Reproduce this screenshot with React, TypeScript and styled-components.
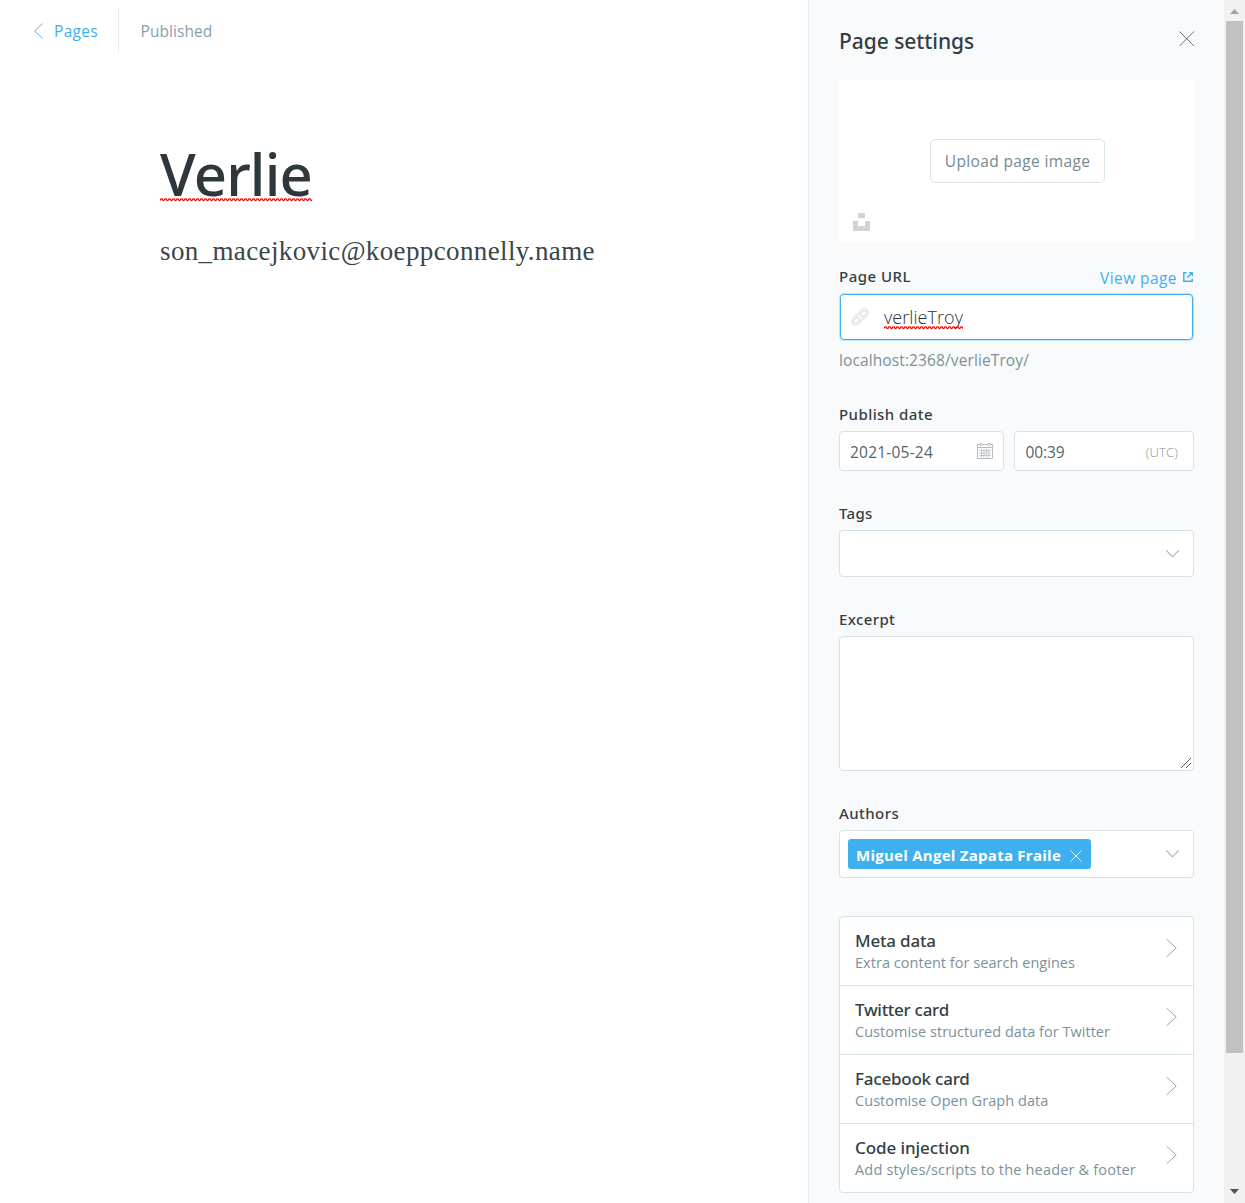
import React from "react";
import styled, { createGlobalStyle } from "styled-components";

const sans = '"Open Sans", "Noto Sans", sans-serif';
const medium = '"Noto Sans", "Open Sans", sans-serif';
const blue = "#3eb0ef";
const line = "#d7e3ea";
const ink = "#343f44";
const muted = "#7c919b";

const GlobalStyle = createGlobalStyle`
  * { box-sizing: border-box; }
  body { margin: 0; background: #fff; overflow: hidden; font-family: ${sans}; }
`;

interface Tracked {
  $track?: number;
}

const Shell = styled.div`
  display: flex;
  width: 1245px;
  height: 1203px;
  overflow: hidden;
`;

/* Editor */
const Editor = styled.main`
  flex: 1;
  min-width: 0;
`;
const TopBar = styled.header`
  display: flex;
  align-items: center;
  height: 45px;
  margin-top: 8px;
  padding-left: 34px;
  font-size: 15.5px;
  line-height: 20px;
`;
const BackLink = styled.a`
  display: flex;
  align-items: center;
  gap: 11px;
  width: 85px;
  height: 45px;
  border-right: 1px solid #e3edf3;
  color: ${blue};
  letter-spacing: 0.31px;
  span { padding-top: 1px; }
`;
const Status = styled.span`
  margin-left: 21.5px;
  padding-top: 1px;
  color: #8a9ea8;
  letter-spacing: 0.06px;
`;
const Article = styled.article`
  padding: 89px 0 0 160px;
`;
const Title = styled.h1`
  margin: 0;
  font: 500 58px/64px ${medium};
  letter-spacing: -0.83px;
  color: #2d373c;
`;
const Body = styled.p`
  margin: 25px 0 0;
  font: 27px/40px "Liberation Serif", serif;
  letter-spacing: 0.37px;
  color: #3a464c;
`;
const Misspelt = styled.span`
  position: relative;
  display: inline-block;
`;
const Wave = styled.svg<{ $top: number }>`
  position: absolute;
  left: 0;
  top: ${(p) => p.$top}px;
`;

/* Settings panel */
const Panel = styled.aside`
  width: 416px;
  padding: 0 30px;
  border-left: 1px solid #e3edf3;
  background: #f9fafc;
`;
const PanelHeader = styled.div`
  display: flex;
  justify-content: space-between;
  height: 80px;
  padding-top: 26px;
`;
const PanelTitle = styled.h2`
  margin: 0;
  font: 500 21px/30px ${medium};
  letter-spacing: -0.04px;
  color: ${ink};
`;
const CloseIcon = styled.svg`
  margin: 5px -1px 0 0;
`;
const Uploader = styled.div`
  position: relative;
  display: flex;
  align-items: center;
  justify-content: center;
  height: 162px;
  padding-left: 2px;
  border-radius: 4px;
  background: #fff;
`;
const UploadButton = styled.div`
  display: flex;
  align-items: center;
  justify-content: center;
  width: 175px;
  height: 44px;
  border: 1px solid ${line};
  border-radius: 5px;
  font-size: 15.5px;
  letter-spacing: 0.36px;
  color: #738a94;
`;
const UnsplashIcon = styled.svg`
  position: absolute;
  left: 14px;
  bottom: 11px;
`;
const Field = styled.section<{ $gap: number }>`
  margin-top: ${(p) => p.$gap}px;
`;
const LabelRow = styled.div`
  display: flex;
  justify-content: space-between;
  height: 27px;
`;
const Label = styled.label<Tracked>`
  font: 500 15px/20px ${medium};
  letter-spacing: ${(p) => p.$track ?? 0.43}px;
  color: ${ink};
`;
const ViewLink = styled.a`
  display: flex;
  gap: 6px;
  padding: 1px 1px 0 0;
  font-size: 15.5px;
  line-height: 22px;
  letter-spacing: 0.43px;
  color: ${blue};
  svg { margin-top: 5px; }
`;
const UrlInput = styled.div`
  display: flex;
  align-items: center;
  gap: 14px;
  height: 46px;
  margin: 1px;
  padding-left: 10px;
  border: 1px solid ${blue};
  border-radius: 4px;
  box-shadow: 0 0 0 1px rgba(62, 176, 239, 0.3);
  background: #fff;
  font-size: 18px;
  font-weight: 300;
  line-height: 24px;
  letter-spacing: 0.06px;
  color: #2b3338;
`;
const Hint = styled.p`
  margin: 10px 0 0;
  font-size: 15.5px;
  line-height: 20px;
  letter-spacing: 0.11px;
  color: ${muted};
`;
const DateRow = styled.div`
  display: grid;
  grid-template-columns: 165px 180px;
  gap: 10px;
`;
const Box = styled.div<{ $height: number; $pad?: string }>`
  display: flex;
  align-items: center;
  justify-content: space-between;
  height: ${(p) => p.$height}px;
  padding: ${(p) => p.$pad ?? "0 14px 0 8px"};
  border: 1px solid ${line};
  border-radius: 4px;
  background: #fff;
`;
const Value = styled.span<Tracked>`
  padding-top: 2px;
  font-size: 15.5px;
  line-height: 20px;
  letter-spacing: ${(p) => p.$track ?? 0}px;
  color: #54666d;
`;
const Zone = styled.small`
  padding-top: 1px;
  font-size: 13px;
  font-weight: 300;
  letter-spacing: 0.2px;
  color: #8496a0;
`;
const ExcerptWrap = styled.div`
  position: relative;
`;
const Excerpt = styled.textarea`
  display: block;
  width: 100%;
  height: 135px;
  margin: 0;
  border: 1px solid ${line};
  border-radius: 4px;
  background: #fff;
  resize: none;
  outline: none;
`;
const Grip = styled.svg`
  position: absolute;
  right: 3px;
  bottom: 3px;
`;
const Token = styled.span`
  display: flex;
  align-items: center;
  justify-content: space-between;
  width: 243px;
  height: 30px;
  padding: 0 9px 0 8px;
  border-radius: 3px;
  background: ${blue};
  font-size: 15px;
  font-weight: 700;
  line-height: 20px;
  letter-spacing: 0.26px;
  color: #fff;
  span { padding-top: 2px; }
  svg { margin-top: 3px; }
`;
const Menu = styled.nav`
  margin-top: 38px;
  border: 1px solid ${line};
  border-radius: 4px;
  background: #fff;
`;
const MenuItem = styled.div`
  display: flex;
  justify-content: space-between;
  height: 69px;
  padding: 13px 16px 0 15px;
  border-bottom: 1px solid ${line};
  &:last-child { height: 68px; border-bottom: 0; }
  svg { margin-top: 8px; }
`;
const MenuTitle = styled.div<Tracked>`
  font: 500 17px/22px ${medium};
  letter-spacing: ${(p) => p.$track}px;
  color: ${ink};
`;
const MenuText = styled.div<Tracked>`
  font-size: 14.5px;
  line-height: 22px;
  letter-spacing: ${(p) => p.$track}px;
  color: ${muted};
`;

/* Scrollbar */
const Scrollbar = styled.div`
  display: flex;
  flex-direction: column;
  align-items: center;
  width: 21px;
  background: #f1f1f1;
`;
const Thumb = styled.div`
  width: 17px;
  height: 1032px;
  background: #c1c1c1;
`;
const Arrow = styled.svg<{ $top: number }>`
  flex: none;
  margin: ${(p) => p.$top}px 0 7px;
`;

const wavePath = (w: number) => {
  let d = "M0 2.4";
  for (let x = 0; x < w; x += 4) d += ` L${x + 1} 0.8 L${x + 2} 0.8 L${x + 3} 2.4 L${x + 4} 2.4`;
  return d;
};

const Squiggle = ({ width, top }: { width: number; top: number }) => (
  <Wave $top={top} width={width} height="4">
    <path d={wavePath(width)} fill="none" stroke="#f00" strokeWidth="1.2" />
  </Wave>
);

const ChevronDown = () => (
  <svg width="13" height="8" viewBox="0 0 13 8">
    <path d="M.4.5 6.5 6.8 12.6.5" fill="none" stroke="#a3b6c0" strokeWidth="1.1" />
  </svg>
);

const menu = [
  { title: "Meta data", tt: -0.18, text: "Extra content for search engines", st: 0.04 },
  { title: "Twitter card", tt: -0.29, text: "Customise structured data for Twitter", st: 0.03 },
  { title: "Facebook card", tt: -0.22, text: "Customise Open Graph data", st: 0.06 },
  { title: "Code injection", tt: -0.08, text: "Add styles/scripts to the header & footer", st: 0.18 },
];

export default function App() {
  return (
    <>
      <GlobalStyle />
      <Shell>
        <Editor>
          <TopBar>
            <BackLink>
              <svg width="9" height="16" viewBox="0 0 9 16">
                <path d="M8.7.6.6 8l8.1 7.4" fill="none" stroke={blue} strokeWidth=".9" />
              </svg>
              <span>Pages</span>
            </BackLink>
            <Status>Published</Status>
          </TopBar>
          <Article>
            <Title>
              <Misspelt>
                Verlie
                <Squiggle width={152} top={56} />
              </Misspelt>
            </Title>
            <Body>son_macejkovic@koeppconnelly.name</Body>
          </Article>
        </Editor>

        <Panel>
          <PanelHeader>
            <PanelTitle>Page settings</PanelTitle>
            <CloseIcon width="16" height="16" viewBox="0 0 16 16">
              <path d="M.5.5l14.5 14.5M15 .5.5 15" stroke="#56666e" strokeWidth=".9" />
            </CloseIcon>
          </PanelHeader>

          <Uploader>
            <UploadButton>Upload page image</UploadButton>
            <UnsplashIcon width="17" height="18" viewBox="0 0 17 18" fill="#d3d3d3">
              <path d="M5 0h7v5H5zM0 8h5v5h7V8h5v10H0z" />
            </UnsplashIcon>
          </Uploader>

          <Field $gap={24}>
            <LabelRow>
              <Label $track={0.48}>Page URL</Label>
              <ViewLink>
                View page
                <svg width="10" height="10" viewBox="0 0 10 10" fill="none" stroke={blue} strokeWidth="1.5">
                  <path d="M3.6.8H.8v8.4h8.4V6.8M4.2 5.8 8.4 1.6" />
                  <path d="M5.5 0H10v4.5z" fill={blue} stroke="none" />
                </svg>
              </ViewLink>
            </LabelRow>
            <UrlInput>
              <svg width="19" height="19" viewBox="0 0 19 19" fill="none">
                <g transform="translate(9 9) rotate(-45)">
                  <g stroke="#c0d2dc" strokeWidth="2.7">
                    <rect x="-9" y="-2.900" width="10" height="5.800" rx="2.900" />
                    <rect x="-1" y="-2.900" width="10" height="5.800" rx="2.900" />
                  </g>
                  <g stroke="#fff" strokeWidth="1.3">
                    <rect x="-9" y="-2.900" width="10" height="5.800" rx="2.900" />
                    <rect x="-1" y="-2.900" width="10" height="5.800" rx="2.900" />
                  </g>
                </g>
              </svg>
              <Misspelt>
                verlieTroy
                <Squiggle width={79} top={21} />
              </Misspelt>
            </UrlInput>
            <Hint>localhost:2368/verlieTroy/</Hint>
          </Field>

          <Field $gap={34}>
            <LabelRow>
              <Label>Publish date</Label>
            </LabelRow>
            <DateRow>
              <Box $height={40} $pad="0 10px">
                <Value $track={0.21}>2021-05-24</Value>
                <svg width="16" height="16" viewBox="0 0 16 16" fill="none" stroke="#a9b7be" strokeWidth=".9">
                  <path d="M.5 1.5h15v14H.5zM.5 4.5h15" />
                  <path d="M2.5 7.5h11M2.5 10h11M2.5 12.5h11M4.5 6v8.5M7 6v8.5M9.5 6v8.5M12 6v8.5" strokeWidth=".7" />
                  <ellipse cx="4" cy="1.5" rx="1.5" ry="1" fill="#fff" />
                  <ellipse cx="12" cy="1.5" rx="1.5" ry="1" fill="#fff" />
                </svg>
              </Box>
              <Box $height={40} $pad="0 15px 0 10.5px">
                <Value $track={-0.1}>00:39</Value>
                <Zone>(UTC)</Zone>
              </Box>
            </DateRow>
          </Field>

          <Field $gap={32}>
            <LabelRow>
              <Label $track={0.3}>Tags</Label>
            </LabelRow>
            <Box $height={47}>
              <span />
              <ChevronDown />
            </Box>
          </Field>

          <Field $gap={32}>
            <LabelRow>
              <Label $track={0.38}>Excerpt</Label>
            </LabelRow>
            <ExcerptWrap>
              <Excerpt />
              <Grip width="10" height="10" viewBox="0 0 10 10">
                <path d="M0 10 10 0M5 10l5-5" stroke="#444" strokeWidth=".9" />
              </Grip>
            </ExcerptWrap>
          </Field>

          <Field $gap={32}>
            <LabelRow>
              <Label>Authors</Label>
            </LabelRow>
            <Box $height={48}>
              <Token>
                <span>Miguel Angel Zapata Fraile</span>
                <svg width="12" height="12" viewBox="0 0 12 12">
                  <path d="M.5.5l11 11M11.5.5l-11 11" stroke="#fff" strokeWidth=".9" />
                </svg>
              </Token>
              <ChevronDown />
            </Box>
          </Field>

          <Menu>
            {menu.map((m) => (
              <MenuItem key={m.title}>
                <div>
                  <MenuTitle $track={m.tt}>{m.title}</MenuTitle>
                  <MenuText $track={m.st}>{m.text}</MenuText>
                </div>
                <svg width="11" height="20" viewBox="0 0 11 20">
                  <path d="M.5 1 10.2 10 .5 19" fill="none" stroke="#8fa3ad" strokeWidth=".95" />
                </svg>
              </MenuItem>
            ))}
          </Menu>
        </Panel>

        <Scrollbar>
          <Arrow $top={9} width="9" height="5" viewBox="0 0 9 5">
            <path d="M0 5 4.5 0 9 5z" fill="#a3a3a3" />
          </Arrow>
          <Thumb />
          <Arrow $top={136} width="9" height="5" viewBox="0 0 9 5">
            <path d="M0 0 4.5 5 9 0z" fill="#505050" />
          </Arrow>
        </Scrollbar>
      </Shell>
    </>
  );
}
